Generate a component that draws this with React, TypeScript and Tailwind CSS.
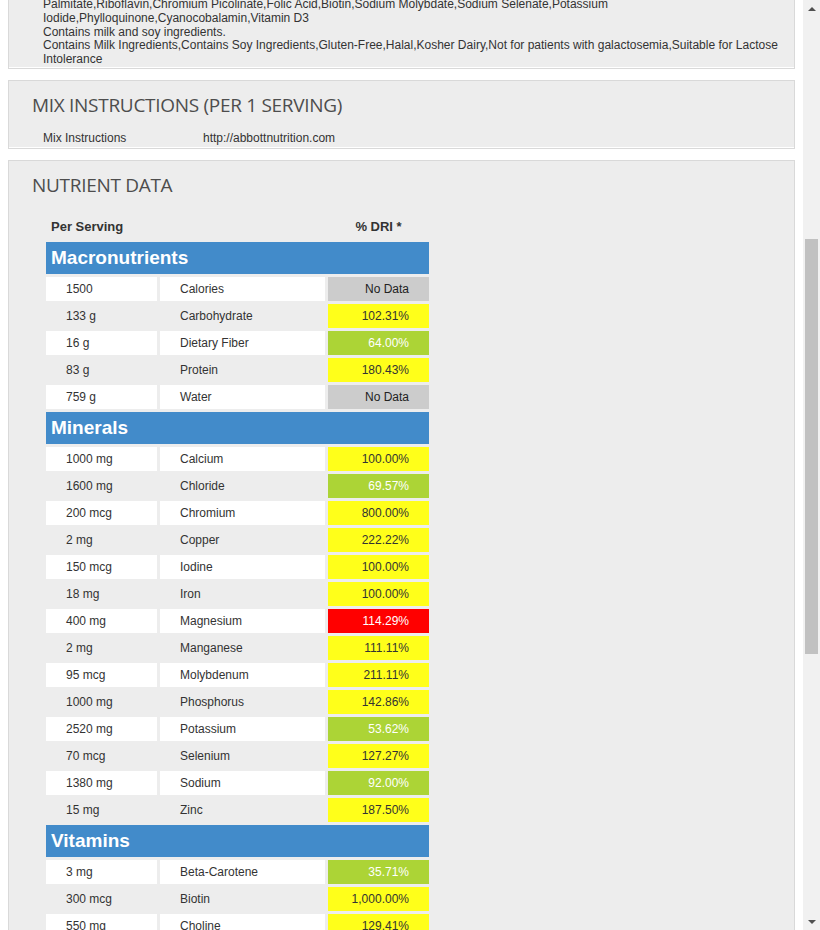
type Level = 'none' | 'ok' | 'low' | 'high';

type Row = { amount: string; name: string; dri: string; level: Level };

const sections: { title: string; rows: Row[] }[] = [
  {
    title: 'Macronutrients',
    rows: [
      { amount: '1500', name: 'Calories', dri: 'No Data', level: 'none' },
      { amount: '133 g', name: 'Carbohydrate', dri: '102.31%', level: 'ok' },
      { amount: '16 g', name: 'Dietary Fiber', dri: '64.00%', level: 'low' },
      { amount: '83 g', name: 'Protein', dri: '180.43%', level: 'ok' },
      { amount: '759 g', name: 'Water', dri: 'No Data', level: 'none' },
    ],
  },
  {
    title: 'Minerals',
    rows: [
      { amount: '1000 mg', name: 'Calcium', dri: '100.00%', level: 'ok' },
      { amount: '1600 mg', name: 'Chloride', dri: '69.57%', level: 'low' },
      { amount: '200 mcg', name: 'Chromium', dri: '800.00%', level: 'ok' },
      { amount: '2 mg', name: 'Copper', dri: '222.22%', level: 'ok' },
      { amount: '150 mcg', name: 'Iodine', dri: '100.00%', level: 'ok' },
      { amount: '18 mg', name: 'Iron', dri: '100.00%', level: 'ok' },
      { amount: '400 mg', name: 'Magnesium', dri: '114.29%', level: 'high' },
      { amount: '2 mg', name: 'Manganese', dri: '111.11%', level: 'ok' },
      { amount: '95 mcg', name: 'Molybdenum', dri: '211.11%', level: 'ok' },
      { amount: '1000 mg', name: 'Phosphorus', dri: '142.86%', level: 'ok' },
      { amount: '2520 mg', name: 'Potassium', dri: '53.62%', level: 'low' },
      { amount: '70 mcg', name: 'Selenium', dri: '127.27%', level: 'ok' },
      { amount: '1380 mg', name: 'Sodium', dri: '92.00%', level: 'low' },
      { amount: '15 mg', name: 'Zinc', dri: '187.50%', level: 'ok' },
    ],
  },
  {
    title: 'Vitamins',
    rows: [
      { amount: '3 mg', name: 'Beta-Carotene', dri: '35.71%', level: 'low' },
      { amount: '300 mcg', name: 'Biotin', dri: '1,000.00%', level: 'ok' },
      { amount: '550 mg', name: 'Choline', dri: '129.41%', level: 'ok' },
    ],
  },
];

const driColor: Record<Level, string> = {
  none: 'bg-[#cccccc] text-[#222]',
  ok: 'bg-[#ffff1a] text-[#333]',
  low: 'bg-[#acd436] text-white',
  high: 'bg-[#ff0000] text-white',
};

const panel =
  'mx-[8px] border border-[#d9d9d9] bg-[#ededed] shadow-[inset_0_-1px_0_#fff]';

const heading =
  "pl-[23px] text-[19px] leading-[27px] tracking-[-0.3px] font-medium text-[#4d4d4d] font-['Open_Sans',sans-serif]";

const NutrientRow = ({ row, striped }: { row: Row; striped: boolean }) => {
  const cell = striped ? '' : 'bg-white';
  return (
    <div className="grid grid-cols-[111px_165px_101px] gap-[3px] h-[24px] leading-[24px]">
      <div className={`${cell} pl-[20px]`}>{row.amount}</div>
      <div className={`${cell} pl-[20px]`}>{row.name}</div>
      <div className={`${driColor[row.level]} pr-[20px] text-right`}>{row.dri}</div>
    </div>
  );
};

const Scrollbar = () => (
  <div className="w-[17px] shrink-0 bg-[#f1f1f1] flex flex-col">
    <div className="h-[17px] flex items-center justify-center">
      <div className="w-0 h-0 border-x-[4px] border-x-transparent border-b-[4px] border-b-[#505050]" />
    </div>
    <div className="h-[222px]" />
    <div className="h-[415px] mx-[2px] bg-[#c1c1c1]" />
    <div className="flex-1" />
    <div className="h-[17px] flex items-center justify-center">
      <div className="w-0 h-0 border-x-[4px] border-x-transparent border-t-[4px] border-t-[#505050]" />
    </div>
  </div>
);

export default function App() {
  return (
    <div className="flex h-[930px] w-[820px] overflow-hidden bg-white text-[12px] text-[#333] font-['Liberation_Sans',Arial,sans-serif]">
      <div className="flex-1 min-w-0">
        {/* ingredients (scrolled partly out of view) */}
        <div className={`${panel} -mt-[20px] pt-[17px] pb-[1px]`}>
          <div className="pl-[34px] leading-[1.15]">
            <div>Palmitate,Riboflavin,Chromium Picolinate,Folic Acid,Biotin,Sodium Molybdate,Sodium Selenate,Potassium</div>
            <div>Iodide,Phylloquinone,Cyanocobalamin,Vitamin D3</div>
            <div>Contains milk and soy ingredients.</div>
            <div>Contains Milk Ingredients,Contains Soy Ingredients,Gluten-Free,Halal,Kosher Dairy,Not for patients with galactosemia,Suitable for Lactose</div>
            <div>Intolerance</div>
          </div>
        </div>

        <div className={`${panel} mt-[11px] pt-[11px] pb-[3px]`}>
          <h2 className={heading}>MIX INSTRUCTIONS (PER 1 SERVING)</h2>
          <div className="mt-[12px] flex pl-[34px] leading-[14px]">
            <div className="w-[160px]">Mix Instructions</div>
            <div>http://abbottnutrition.com</div>
          </div>
        </div>

        <div className={`${panel} mt-[11px] pt-[11px] pb-[20px]`}>
          <h2 className={heading}>NUTRIENT DATA</h2>
          <div className="mt-[15px] ml-[37px] w-[383px] flex flex-col gap-[3px]">
            <div className="grid grid-cols-[279px_101px] gap-[3px] h-[25px] leading-[25px] text-[13px] font-bold">
              <div className="pl-[5px]">Per Serving</div>
              <div className="text-center">% DRI *</div>
            </div>
            {sections.map((s) => (
              <div key={s.title} className="flex flex-col gap-[3px]">
                <div className="h-[32px] leading-[32px] bg-[#428bca] pl-[5px] text-[19px] font-bold text-white">
                  {s.title}
                </div>
                {s.rows.map((r, i) => (
                  <NutrientRow key={r.name} row={r} striped={i % 2 === 1} />
                ))}
              </div>
            ))}
          </div>
        </div>
      </div>
      <Scrollbar />
    </div>
  );
}
